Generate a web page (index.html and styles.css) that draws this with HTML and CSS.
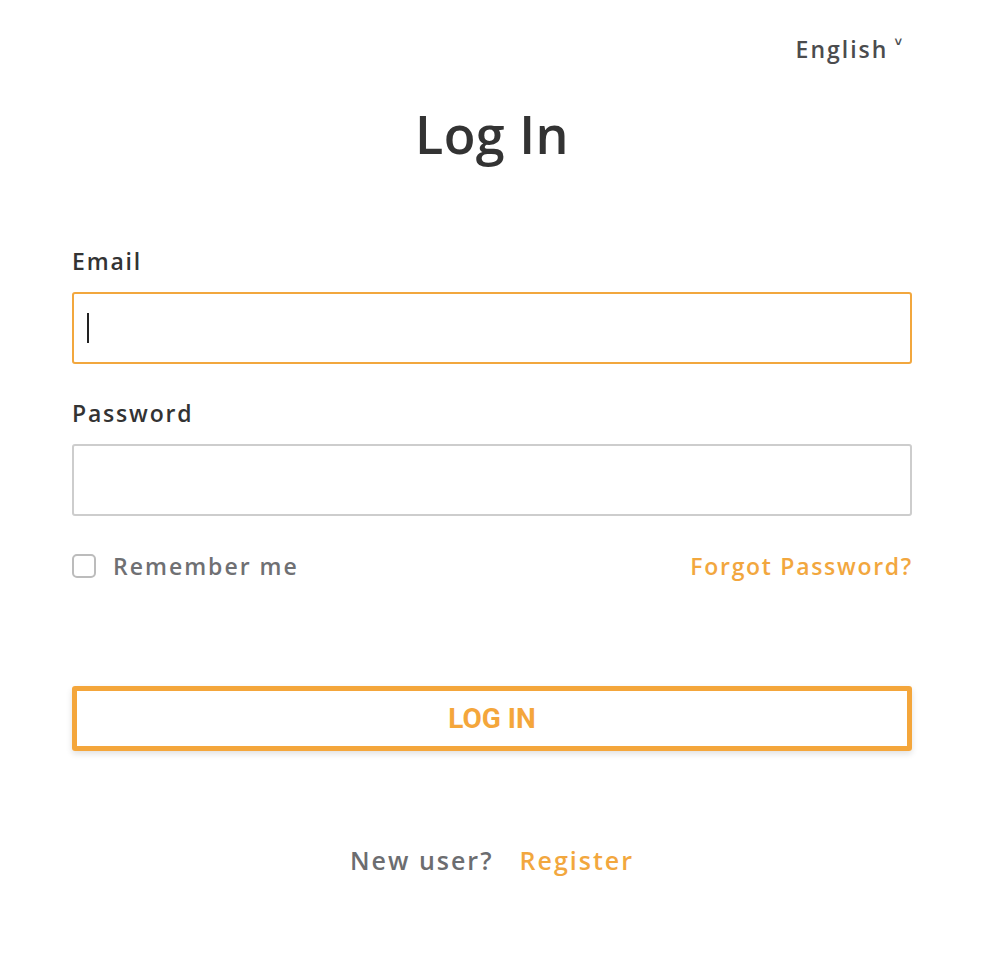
FILE: index.html
```html
<!DOCTYPE html>
<html lang="en">
<head>
<meta charset="utf-8">
<title>Log In</title>
<link rel="stylesheet" href="styles.css">
</head>
<body>
<div class="page">
  <div class="lang-bar">
    <span class="lang">English<span class="caret">˅</span></span>
  </div>
  <h1 class="title">Log In</h1>
  <form class="form">
    <label class="label" for="email">Email</label>
    <div class="input focused"><span class="cursor"></span></div>
    <label class="label pw" for="pw">Password</label>
    <div class="input"></div>
    <div class="row">
      <label class="remember"><span class="box"></span>Remember me</label>
      <a class="forgot">Forgot Password?</a>
    </div>
    <div class="btn">LOG IN</div>
  </form>
  <div class="footer">
    <span class="new">New user?</span>
    <a class="register">Register</a>
  </div>
</div>
</body>
</html>
```
FILE: styles.css
```css
* { box-sizing: border-box; }
html, body { margin: 0; padding: 0; background: #fff; }
body {
  font-family: "Open Sans", "Liberation Sans", sans-serif;
  color: #333;
}
.page {
  width: 982px;
  padding: 0 70px 0 72px;
  display: flex;
  flex-direction: column;
}
.lang-bar {
  display: flex;
  justify-content: flex-end;
  padding-top: 34px;
  height: 64px;
}
.lang {
  font-size: 23px;
  font-weight: 600;
  letter-spacing: 2px;
  color: #4b4c4e;
  line-height: 30px;
  display: flex;
  align-items: flex-start;
  margin-right: 10px;
}
.caret {
  font-size: 13px;
  line-height: 13px;
  margin-left: 6px;
  margin-top: 1px;
  font-weight: 700;
  letter-spacing: 0;
}
.title {
  margin: 38px 0 0;
  text-align: center;
  font-size: 52px;
  font-weight: 600;
  line-height: 64px;
  color: #333;
  letter-spacing: 0.5px;
}
.form {
  margin-top: 80px;
  display: flex;
  flex-direction: column;
}
.label {
  font-size: 23px;
  font-weight: 600;
  letter-spacing: 1.8px;
  line-height: 30px;
  color: #333;
}
.label.pw { margin-top: 34px; }
.input {
  margin-top: 16px;
  height: 72px;
  border: 2px solid #cdcdcd;
  border-radius: 3px;
  display: flex;
  align-items: center;
  padding-left: 13px;
}
.input.focused { border-color: #f2a73e; }
.cursor {
  width: 2px;
  height: 30px;
  background: #222;
}
.row {
  margin-top: 35px;
  display: flex;
  justify-content: space-between;
  align-items: center;
  height: 30px;
}
.remember {
  display: flex;
  align-items: center;
  font-size: 23px;
  font-weight: 600;
  letter-spacing: 2px;
  color: #6f7073;
}
.box {
  width: 24px;
  height: 24px;
  border: 2px solid #bcbcbc;
  border-radius: 5px;
  margin-right: 17px;
}
.forgot {
  font-size: 23px;
  font-weight: 600;
  letter-spacing: 1.7px;
  margin-right: -1px;
  color: #f2a73e;
}
.btn {
  margin-top: 105px;
  height: 65px;
  border: 5px solid #f4a63b;
  border-radius: 3px;
  box-shadow: 0 3px 6px rgba(0,0,0,0.12);
  display: flex;
  align-items: center;
  justify-content: center;
  font-family: Roboto, "Liberation Sans", sans-serif;
  font-weight: 700;
  font-size: 28px;
  color: #f4a63b;
}
.footer {
  margin-top: 93px;
  display: flex;
  justify-content: center;
  gap: 26px;
  font-size: 25px;
  font-weight: 600;
  letter-spacing: 2px;
  line-height: 32px;
}
.new { color: #6c6d70; }
.register { color: #f2a73e; }
```
